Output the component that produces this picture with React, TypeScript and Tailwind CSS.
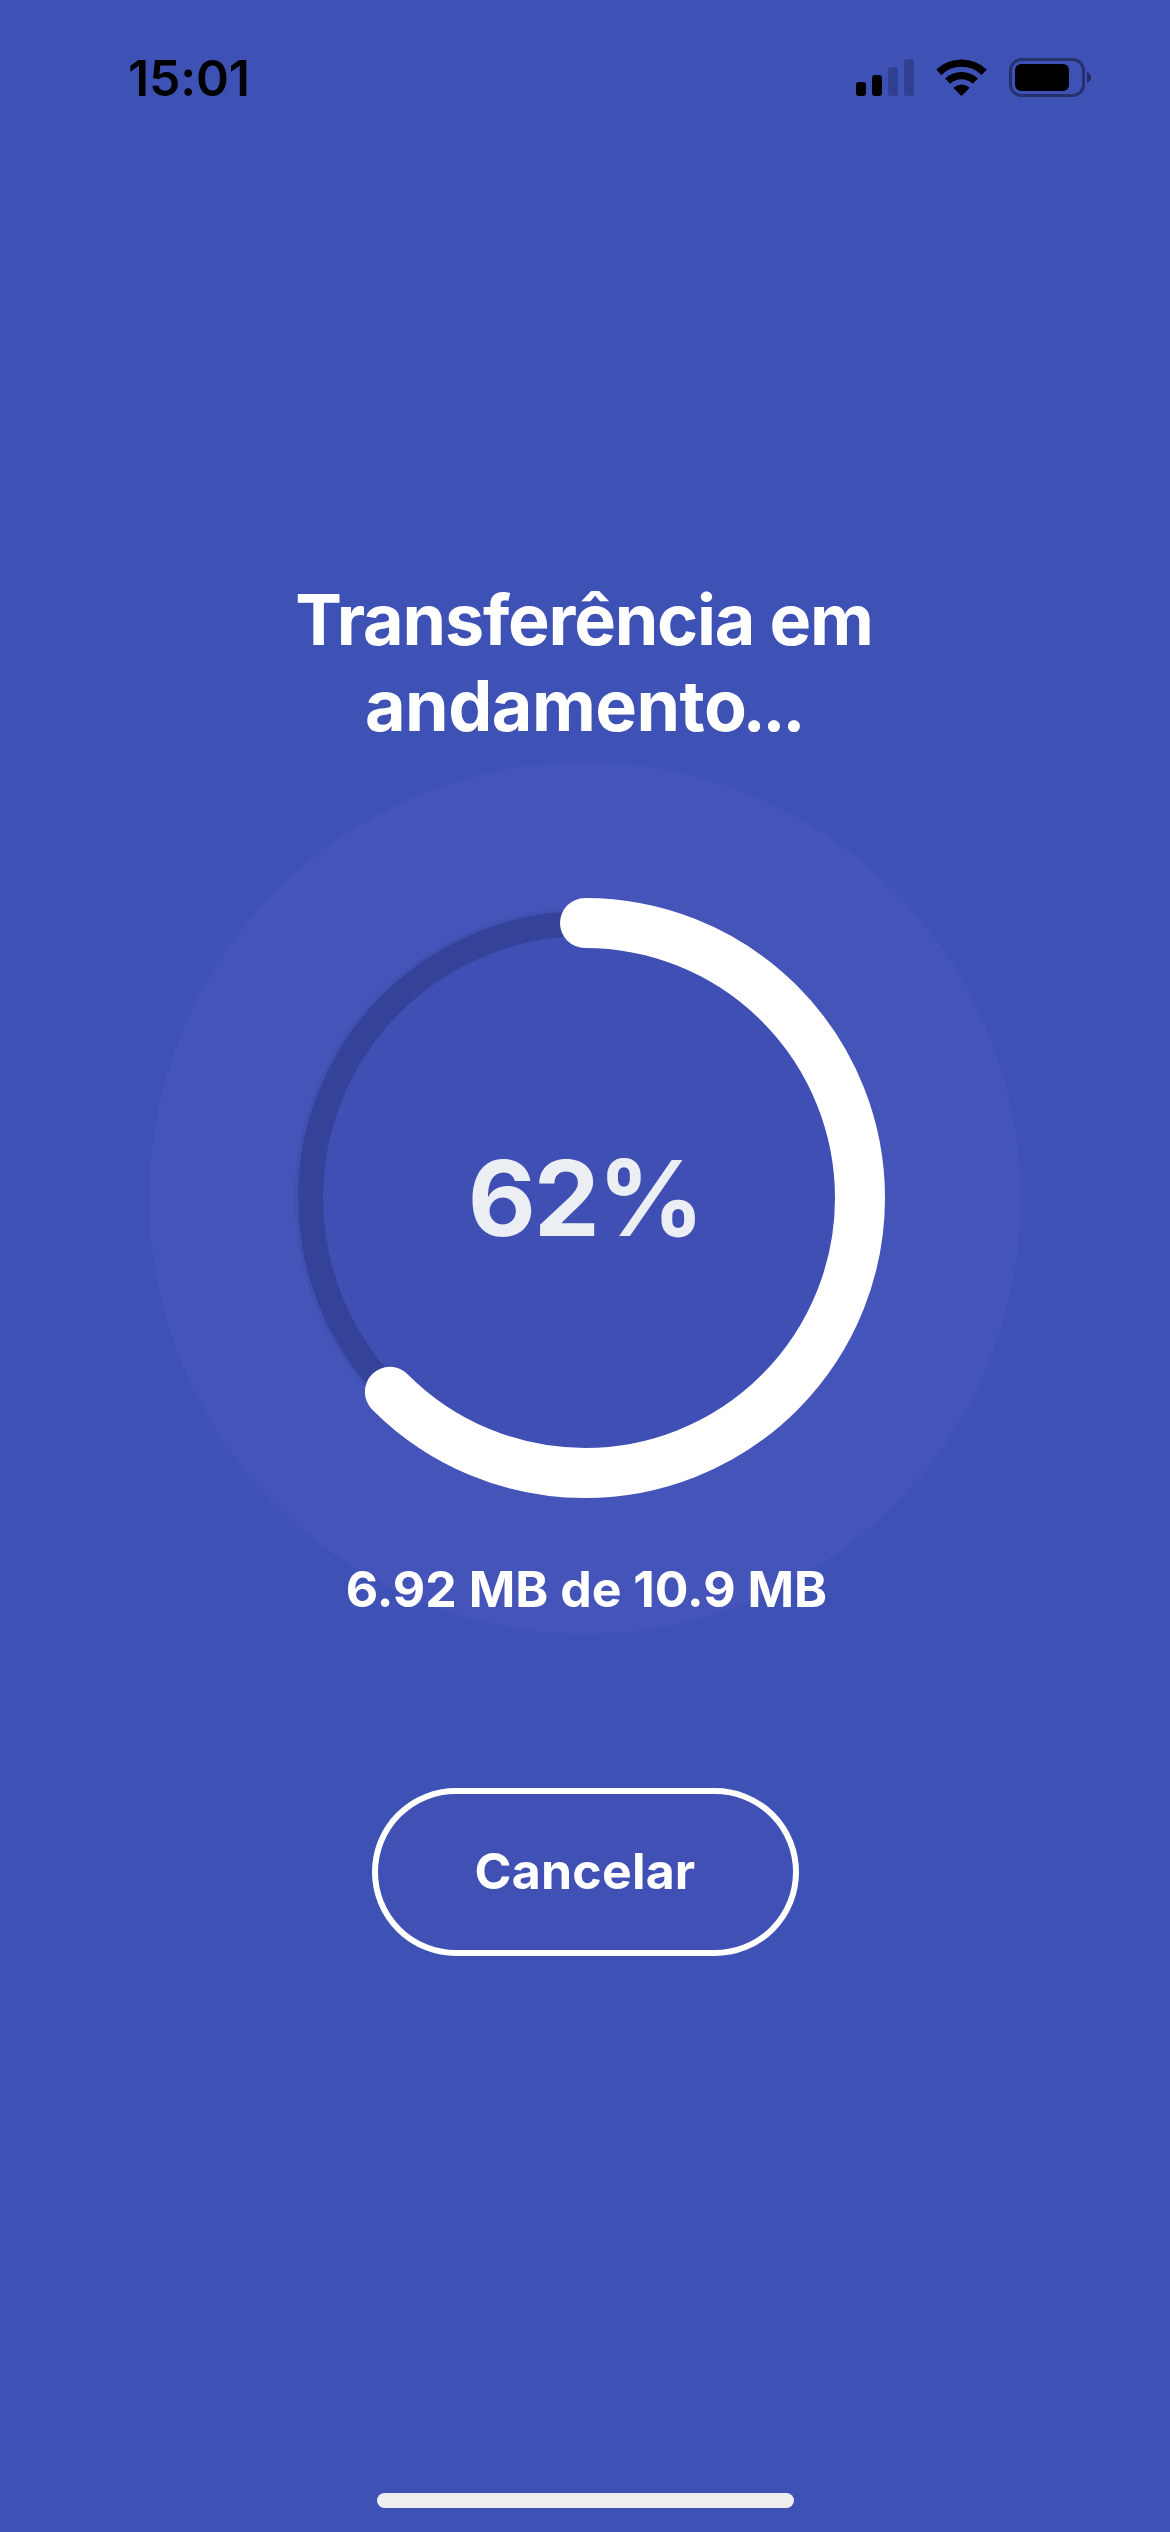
const transfer = {
  percent: 62,
  progress: 0.6253,
  status: "6.92 MB de 10.9 MB",
}

function SignalIcon() {
  return (
    <svg className="h-[40px] w-[59px]" viewBox="0 0 59 40">
      <rect x="0" y="24" width="10" height="14" rx="3" fill="#000" />
      <rect x="16" y="17" width="10" height="21" rx="3" fill="#000" />
      <rect x="32" y="9" width="10" height="29" rx="3" fill="#000" fillOpacity="0.2" />
      <rect x="48" y="1" width="10" height="37" rx="3" fill="#000" fillOpacity="0.2" />
    </svg>
  )
}

function WifiIcon() {
  return (
    <svg className="h-[40px] w-[52px]" viewBox="0 0 52 40" fill="none" stroke="#000" strokeWidth="7.4">
      <path d="M2.8 14.2A33 33 0 0 1 48.2 14.2" />
      <path d="M11.6 23.2A20 20 0 0 1 39.4 23.2" />
      <path
        d="M25.5 37L18.4 29.9Q25.5 24.6 32.6 29.9Z"
        fill="#000"
        strokeWidth="1.4"
        strokeLinejoin="round"
      />
    </svg>
  )
}

function BatteryIcon() {
  return (
    <svg className="h-[40px] w-[84px]" viewBox="0 0 84 40">
      <rect x="1.5" y="1.5" width="73" height="36" rx="11" fill="none" stroke="#000" strokeOpacity="0.4" strokeWidth="3" />
      <rect x="6" y="6" width="54" height="27" rx="6" fill="#000" />
      <path d="M78 14C80.5 15.1 82 17.1 82 19.5S80.5 23.9 78 25Z" fill="#000" fillOpacity="0.45" />
    </svg>
  )
}

function ProgressRing({ progress }: { progress: number }) {
  const radius = 275
  const length = 2 * Math.PI * radius

  return (
    <svg className="absolute inset-0 h-[600px] w-[600px] overflow-visible" viewBox="0 0 600 600" fill="none">
      <circle cx="300" cy="300" r="436" fill="#4454b8" />
      <circle cx="300" cy="300" r={radius} fill="#404fb4" />
      <circle cx="300" cy="300" r="276" stroke="#35439b" strokeOpacity="0.15" strokeWidth="29" />
      <circle cx="300" cy="300" r="274.5" stroke="#344399" strokeWidth="25" />
      <circle
        cx="300"
        cy="300"
        r={radius}
        stroke="#fff"
        strokeWidth="50"
        strokeLinecap="round"
        strokeDasharray={`${length * progress} ${length}`}
        transform="rotate(-90 300 300)"
      />
    </svg>
  )
}

export default function App() {
  return (
    <div className="flex h-[2532px] w-[1170px] flex-col overflow-hidden bg-[#3e51b5] font-['Inter',sans-serif] text-white">
      <header className="flex h-[156px] items-center justify-between pr-[77px] pl-[128px]">
        <span className="text-[50px] leading-[60px] font-semibold tracking-[-0.2px] text-black">15:01</span>
        <div className="flex items-center">
          <SignalIcon />
          <div className="ml-[21px]">
            <WifiIcon />
          </div>
          <div className="ml-[21px]">
            <BatteryIcon />
          </div>
        </div>
      </header>

      <main className="flex flex-1 flex-col items-center pt-[421px]">
        <h1 className="text-center text-[70px] leading-[86px] font-bold">
          <span className="block pr-[2px] tracking-[-1.2px]">Transferência em</span>
          <span className="block pr-[3px] tracking-[-0.5px]">
            andamento<span className="-ml-[4px] tracking-[-3.5px]">...</span>
          </span>
        </h1>

        <div className="relative mt-[149px] flex h-[600px] w-[600px] items-center justify-center">
          <ProgressRing progress={transfer.progress} />
          <span className="relative pb-[2px] text-[105px] leading-none font-bold tracking-[-2.2px] text-[#ebeff3]">
            {transfer.percent}%
          </span>
        </div>

        <p className="relative mt-[61px] pl-[3px] text-[50px] leading-[60px] font-bold">{transfer.status}</p>

        <button className="mt-[169px] flex h-[168px] w-[427px] items-center justify-center rounded-[84px] border-6 border-white bg-[#4050b4] pb-[2px] text-[50px] leading-[60px] font-bold tracking-[0.2px]">
          Cancelar
        </button>
      </main>

      <footer className="flex justify-center pb-[24px]">
        <div className="h-[15px] w-[417px] rounded-full bg-[#efedee]" />
      </footer>
    </div>
  )
}
